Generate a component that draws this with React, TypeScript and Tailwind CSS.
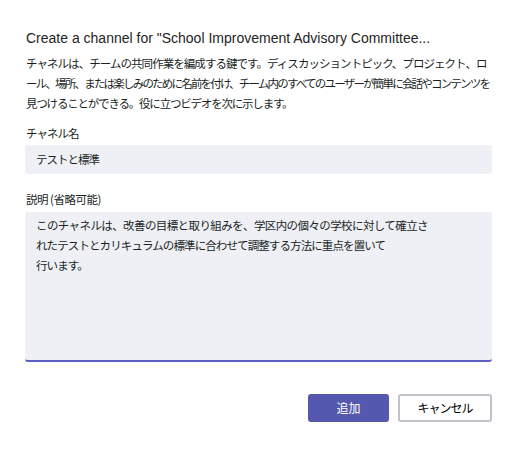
export default function App() {
  return (
    <div className="w-[520px] h-[449px] bg-white font-['Noto_Sans_CJK_JP','Liberation_Sans',sans-serif] text-[#201f1e]">
      <div className="pl-[25px] pr-[28px] pt-[28px]">
        <h1 className="pl-px text-[14px] leading-[20px] text-[#252423] font-['Liberation_Sans','Noto_Sans_CJK_JP',sans-serif]">
          Create a channel for "School Improvement Advisory Committee...
        </h1>
        <p className="mt-[5px] pl-px text-[11.5px] leading-[20px] whitespace-nowrap">
          <span className="block tracking-[-0.95px]">
            チャネルは、チームの共同作業を編成する鍵です。ディスカッショントピック、プロジェクト、ロ
          </span>
          <span className="block tracking-[-1.8px]">
            ール、場所、または楽しみのために名前を付け、チーム内のすべてのユーザーが簡単に会話やコンテンツを
          </span>
          <span className="block tracking-[-1.2px]">
            見つけることができる。役に立つビデオを次に示します。
          </span>
        </p>
        <label className="block mt-[11px] pl-px text-[11.5px] leading-[18px] tracking-[-1px]">チャネル名</label>
        <div className="mt-[3px] h-[29px] rounded-[3px] bg-[#eef0f5] px-[11px] flex items-center text-[11.5px] tracking-[-1px]">
          テストと標準
        </div>
        <label className="block mt-[16px] pl-px text-[11.5px] leading-[18px] tracking-[-0.5px]">
          説明&nbsp;(省略可能)
        </label>
        <div className="mt-[4px] h-[150px] rounded-[3px] bg-[#eef0f5] border-b-2 border-[#5b5fc7] px-[11px] pt-[3px] text-[11.5px] leading-[20px] whitespace-nowrap">
          <span className="block tracking-[-0.6px]">
            このチャネルは、改善の目標と取り組みを、学区内の個々の学校に対して確立さ
          </span>
          <span className="block tracking-[-0.9px]">
            れたテストとカリキュラムの標準に合わせて調整する方法に重点を置いて
          </span>
          <span className="block tracking-[-0.9px]">行います。</span>
        </div>
        <div className="mt-[32px] flex justify-end gap-[9px]">
          <button className="w-[81px] h-[28px] rounded-[3px] bg-[#5558af] text-white text-[12px]">
            追加
          </button>
          <button className="w-[94px] h-[28px] rounded-[3px] bg-white border-2 border-[#c0c3ca] text-[12px] tracking-[-1px] text-black">
            キャンセル
          </button>
        </div>
      </div>
    </div>
  );
}
